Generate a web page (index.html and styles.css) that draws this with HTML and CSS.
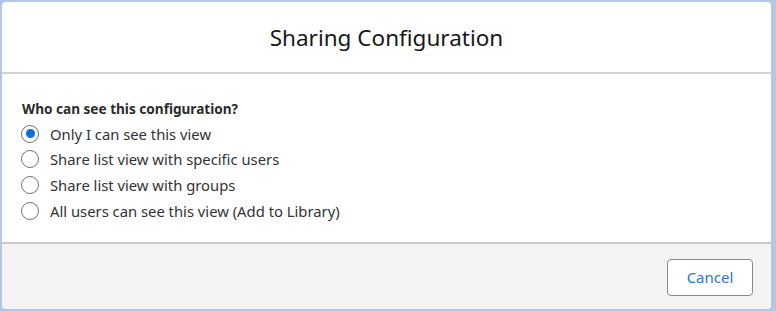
FILE: index.html
```html
<!DOCTYPE html>
<html lang="en">
<head>
    <meta charset="UTF-8">
    <meta name="viewport" content="width=device-width, initial-scale=1">
    <title>Sharing Configuration</title>
    <link rel="stylesheet" href="styles.css">
</head>
<body>
<div class="modal">
    <!-- Header -->
    <div class="modal-header">
        <h2>Sharing Configuration</h2>
    </div>

    <!-- Body -->
    <div class="modal-body">
        <div class="group-label">Who can see this configuration?</div>
        <label class="radio"><input type="radio" name="share" checked><span class="dot"></span>Only I can see this view</label>
        <label class="radio"><input type="radio" name="share"><span class="dot"></span>Share list view with specific users</label>
        <label class="radio"><input type="radio" name="share"><span class="dot"></span>Share list view with groups</label>
        <label class="radio"><input type="radio" name="share"><span class="dot"></span>All users can see this view (Add to Library)</label>
    </div>

    <!-- Footer -->
    <div class="modal-footer">
        <button class="btn">Cancel</button>
    </div>
</div>
</body>
</html>
```

FILE: styles.css
```css
html, body {
    margin: 0;
    height: 100%;
}
body {
    background: #b3c7e4;
    font-family: "Noto Sans", "Open Sans", sans-serif;
    color: #181818;
    padding: 2px 5px 0 2px;
    box-sizing: border-box;
}
.modal {
    background: #fff;
    border-radius: 4px;
    height: 307px;
    display: flex;
    flex-direction: column;
    overflow: hidden;
}
.modal-header {
    height: 70px;
    display: flex;
    align-items: center;
    justify-content: center;
    border-bottom: 2px solid #d4d4d4;
}
.modal-header h2 {
    margin: 0;
    font-size: 22.5px;
    font-weight: 400;
    color: #181818;
}
.modal-body {
    height: 170px;
    padding: 25px 19px 0 19px;
    box-sizing: border-box;
    border-bottom: 2px solid #c9c9c9;
}
.group-label {
    font-size: 13.6px;
    font-weight: 700;
    color: #2b2b2b;
    margin-left: 1px;
    margin-bottom: 3px;
}
.radio {
    display: flex;
    align-items: center;
    height: 25.6px;
    font-size: 14.8px;
    color: #333;
}
.radio input {
    display: none;
}
.radio .dot {
    width: 16px;
    height: 16px;
    border: 1px solid #747474;
    border-radius: 50%;
    margin-right: 11px;
    box-sizing: content-box;
    display: flex;
    align-items: center;
    justify-content: center;
}
.radio input:checked + .dot::after {
    content: "";
    width: 9px;
    height: 9px;
    border-radius: 50%;
    background: #0b6fde;
}
.modal-footer {
    flex: 1;
    background: #f3f3f3;
    display: flex;
    align-items: center;
    justify-content: flex-end;
    padding-right: 18px;
}
.btn {
    width: 86px;
    height: 37px;
    background: #fff;
    border: 1px solid #8a8a8a;
    border-radius: 4px;
    color: #2f74d0;
    font-family: inherit;
    font-size: 15px;
    margin-top: 1px;
}
```
